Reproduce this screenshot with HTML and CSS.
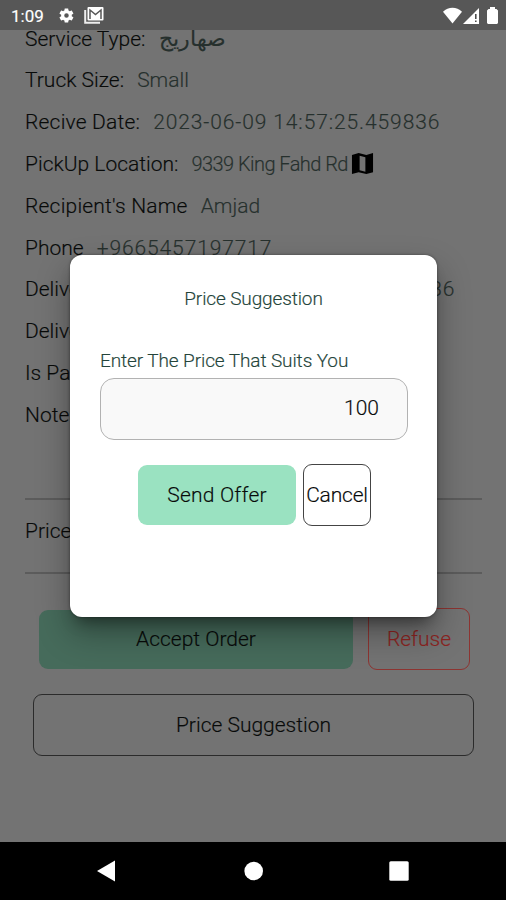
FILE: index.html
```html
<!DOCTYPE html>
<html lang="en">
<head>
<meta charset="utf-8">
<title>Price Suggestion</title>
<link rel="stylesheet" href="styles.css">
</head>
<body>
<div class="phone">
  <header class="status">
    <span class="clock">1:09</span>
    <svg class="gear" viewBox="0 0 24 24"><path fill="#fff" fill-rule="evenodd" d="M19.4 13c.1-.7.1-1.300 0-2l2.100-1.600c.2-.2.3-.4.1-.7l-2-3.400c-.1-.2-.4-.3-.6-.2l-2.500 1c-.5-.4-1.100-.7-1.700-1l-.4-2.600c0-.3-.2-.5-.5-.5h-4c-.3 0-.5.2-.5.5L9 5.100c-.6.300-1.200.600-1.700 1l-2.500-1c-.2-.1-.5 0-.6.2l-2 3.400c-.1.300-.1.500.1.700L4.500 11c-.1.700-.1 1.300 0 2l-2.200 1.600c-.2.200-.2.400-.1.700l2 3.400c.1.200.4.300.6.2l2.500-1c.5.400 1.100.7 1.700 1l.4 2.600c0 .3.200.5.500.5h4c.3 0 .5-.2.500-.5l.4-2.600c.6-.3 1.200-.6 1.700-1l2.500 1c.2.100.5 0 .6-.2l2-3.400c.2-.3.100-.5-.1-.7zM12 15.200a3.200 3.200 0 1 1 0-6.400 3.200 3.200 0 0 1 0 6.400z"/></svg>
    <svg class="mail" viewBox="0 0 20 17"><path d="M1.200 3v12.700H16" fill="none" stroke="#eee" stroke-width="2"/><rect x="3.500" y="0" width="16" height="13.500" rx="1" fill="#fff"/><path d="M6 12V3l5.500 4.500L17 3v9" fill="none" stroke="#575757" stroke-width="1.500"/></svg>
    <span class="spacer"></span>
    <svg class="wifi" viewBox="0 0 20 17"><path fill="#fff" d="M0 4.500C5.500-1 14.500-1 20 4.500L10 17z"/></svg>
    <svg class="signal" viewBox="0 0 16 16"><path fill="#fff" d="M0 16 16 0v16z"/><path d="M12.800 6v5M12.800 12.500v1.500" stroke="#444" stroke-width="1.500"/></svg>
    <svg class="battery" viewBox="0 0 11 17"><path fill="#fff" d="M3 0h5v2h1.500L11 3.500V16l-1 1H1l-1-1V3.500L1.500 2H3z"/></svg>
  </header>
  <main class="content">
    <div class="row"><span class="k">Service Type:</span><span class="v ar" lang="ar">صهاريج</span></div>
    <div class="row"><span class="k">Truck Size:</span><span class="v">Small</span></div>
    <div class="row"><span class="k loose">Recive Date:</span><span class="v digits">2023-06-09 14:57:25.459836</span></div>
    <div class="row"><span class="k">PickUp Location:</span><span class="v address">9339 King Fahd Rd</span><svg class="map" viewBox="0 0 24 24"><path fill-rule="evenodd" d="M1 3 8 1l8 2 7-2v20l-7 2-8-2-7 2zM9 4v15l6 1.500V5.500z"/></svg></div>
    <div class="row"><span class="k loose">Recipient's Name</span><span class="v">Amjad</span></div>
    <div class="row"><span class="k">Phone</span><span class="v digits">+9665457197717</span></div>
    <div class="row"><span class="k delivery">Delivery Date:</span><span class="v digits">2023-06-09 14:57:25.459836</span></div>
    <div class="row"><span class="k">Delivery</span></div>
    <div class="row"><span class="k">Is Paid</span></div>
    <div class="row"><span class="k">Notes</span></div>
    <div class="price"><span class="k">Price</span></div>
    <div class="actions">
      <div class="btn accept"><span>Accept Order</span></div>
      <div class="btn refuse"><span>Refuse</span></div>
    </div>
    <div class="btn suggest"><span>Price Suggestion</span></div>
  </main>
  <nav class="nav">
    <svg viewBox="0 0 20 22"><path fill="#fff" d="M1 11 19 .5v21z"/></svg>
    <svg viewBox="0 0 20 22"><circle cx="10.700" cy="11" r="9.300" fill="#fff"/></svg>
    <svg viewBox="0 0 20 22"><rect x=".3" y="1.300" width="19.400" height="19.400" rx="1.500" fill="#fff"/></svg>
  </nav>
  <section class="dialog">
    <h1 class="title"><span>Price Suggestion</span></h1>
    <label class="prompt"><span>Enter The Price That Suits You</span></label>
    <div class="field"><span>100</span></div>
    <div class="choices">
      <div class="btn send"><span>Send Offer</span></div>
      <div class="btn cancel"><span>Cancel</span></div>
    </div>
  </section>
</div>
</body>
</html>
```
FILE: styles.css
```css
* { box-sizing: border-box; }
body { margin: 0; }
.phone {
  position: relative;
  width: 506px;
  height: 900px;
  overflow: hidden;
  display: flex;
  flex-direction: column;
  background: #737373;
  color: #080a09;
  font: 300 21px/42px Roboto, "Noto Sans", "DejaVu Sans", sans-serif;
  white-space: nowrap;
  -webkit-text-stroke: .15px currentColor;
}
.status {
  height: 30px;
  flex: none;
  display: flex;
  align-items: center;
  padding: 1px 8px 0 11px;
  background: #575757;
  z-index: 1;
}
.clock { font: 400 17px/30px Roboto, sans-serif; color: #fff; width: 47px; }
.gear { width: 17px; height: 17px; }
.mail { width: 20px; height: 17px; margin-left: 9px; }
.spacer { flex: 1; }
.wifi { width: 19px; height: 17px; }
.signal { width: 16px; height: 16px; margin: 0 8px 0 1px; }
.battery { width: 11px; height: 17px; }
.content { flex: 1; padding: 0 24px 0 25px; margin-top: -12.400px; }
.row { height: 41.800px; display: flex; align-items: center; }
.k { margin-right: 13px; }
.loose { letter-spacing: .2px; }
.delivery { margin-right: 19px; }
.v { color: #26302d; }
.digits { letter-spacing: .89px; }
.address { font-size: 20px; letter-spacing: -.55px; }
.ar { font-family: "DejaVu Sans", sans-serif; font-size: 22px; margin-left: 1px; }
.map { width: 23px; height: 23px; margin-left: 3px; }
.price {
  height: 76px;
  margin-top: 62.900px;
  border-top: 2px solid #5c5c5c;
  border-bottom: 2px solid #5c5c5c;
  line-height: 62px;
}
.actions { display: flex; justify-content: space-between; margin: 34px 12px 0 14px; align-items: center; }
.btn { display: flex; align-items: center; justify-content: center; border-radius: 9px; }
.accept { width: 314px; height: 59px; background: #466b5b; }
.refuse { width: 102px; height: 62px; border: 1.500px solid #8d3431; color: #8d2321; }
.suggest { height: 62px; margin: 24px 8px 0; border: 1.500px solid #2b2b2b; }
.nav {
  height: 58px;
  flex: none;
  display: flex;
  justify-content: space-between;
  align-items: center;
  padding: 0 97px 0 96px;
  background: #000;
}
.nav svg { width: 20px; height: 22px; }
.dialog {
  position: absolute;
  left: 70px;
  top: 255px;
  width: 367px;
  height: 362px;
  padding: 22px 30px 0;
  background: #fff;
  border-radius: 12px;
  box-shadow: 0 11px 15px -7px rgba(0,0,0,.4), 0 16px 32px 2px rgba(0,0,0,.28), 0 0 3px rgba(0,0,0,.4);
  z-index: 2;
}
.title { margin: 0; font-size: 19px; font-weight: 300; line-height: 43px; letter-spacing: -.12px; text-align: center; color: #24443a; }
.prompt { display: block; margin-top: 22px; font-size: 19px; line-height: 38px; letter-spacing: -.1px; color: #24443a; }
.field {
  height: 62px;
  width: 308px;
  margin-top: -2px;
  border: 1.500px solid #b2b2b2;
  border-radius: 14px;
  background: #f9f9f9;
  padding-right: 28px;
  text-align: right;
  line-height: 59px;
}
.choices { display: flex; align-items: center; margin: 24px 0 0 38px; gap: 7px; }
.send { width: 158px; height: 60px; background: #9ae2c1; letter-spacing: .2px; }
.cancel { width: 68px; height: 62px; border: 1.500px solid #444; letter-spacing: -.2px; }
```
